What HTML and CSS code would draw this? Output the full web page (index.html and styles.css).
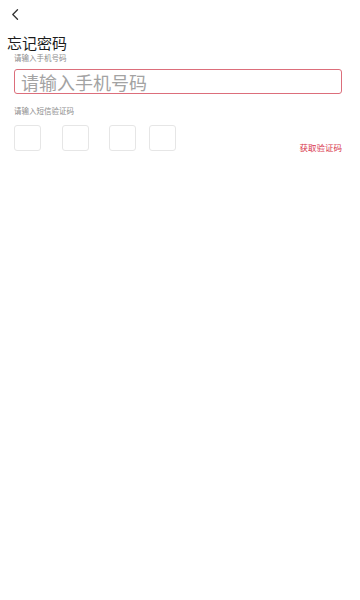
FILE: index.html
```html
<!DOCTYPE html>
<html lang="zh-CN">
<head>
<meta charset="utf-8">
<meta name="viewport" content="width=360">
<title>忘记密码</title>
<link rel="stylesheet" href="styles.css">
</head>
<body>
<div class="page">
  <header class="topbar">
    <button class="back" aria-label="返回">
      <svg width="8" height="11" viewBox="0 0 8 11"><path d="M6.5 0.8 L1.8 5.5 L6.5 10.2" fill="none" stroke="#333" stroke-width="1.3" stroke-linecap="round" stroke-linejoin="round"/></svg>
    </button>
  </header>
  <h1 class="title">忘记密码</h1>
  <div class="label">请输入手机号码</div>
  <input class="phone" type="tel" placeholder="请输入手机号码">
  <div class="label label-code">请输入短信验证码</div>
  <div class="code-row">
    <div class="code-box"></div>
    <div class="code-box code-box-2"></div>
    <div class="code-box code-box-3"></div>
    <div class="code-box code-box-last"></div>
    <a class="get-code" href="#">获取验证码</a>
  </div>
</div>
</body>
</html>
```

FILE: styles.css
```css
html, body {
  margin: 0;
  padding: 0;
  background: #ffffff;
}
body {
  font-family: "Noto Sans CJK SC", "Noto Sans", sans-serif;
  color: #1c1c1c;
}
.page {
  width: 360px;
  min-height: 600px;
  display: flex;
  flex-direction: column;
}
.topbar {
  height: 33px;
  display: flex;
  align-items: flex-start;
}
.back {
  border: 0;
  background: none;
  padding: 0;
  margin: 9px 0 0 11px;
  width: 8px;
  height: 11px;
  display: block;
}
.back svg { display: block; }
.title {
  margin: 0 0 0 7px;
  font-size: 15px;
  line-height: 20px;
  font-weight: 400;
  color: #1c1c1c;
}
.label {
  margin: 0 0 0 14px;
  font-size: 7.5px;
  line-height: 10px;
  color: #8c8c8c;
}
.phone {
  box-sizing: border-box;
  margin: 6px 0 0 14px;
  width: 328px;
  height: 25px;
  border: 1px solid #dc6e7b;
  border-radius: 3px;
  padding: 0 0 0 6px;
  font-family: "Noto Sans CJK SC", "Noto Sans", sans-serif;
  font-size: 18px;
  line-height: 23px;
  color: #333;
  outline: none;
  background: #fff;
}
.phone::placeholder {
  color: #a3a3a3;
}
.label-code {
  margin-top: 12px;
}
.code-row {
  display: flex;
  align-items: flex-start;
  margin: 9px 18px 0 14px;
}
.code-box {
  box-sizing: border-box;
  width: 27px;
  height: 26px;
  border: 1px solid #e6e6e6;
  border-radius: 3px;
  margin-right: 21px;
}
.code-box-2 {
  margin-right: 20px;
}
.code-box-3 {
  margin-right: 13px;
}
.code-box-last {
  margin-right: 0;
}
.get-code {
  margin-left: auto;
  padding-top: 17px;
  font-size: 8.5px;
  line-height: 11px;
  color: #d8354b;
  text-decoration: none;
}
```
